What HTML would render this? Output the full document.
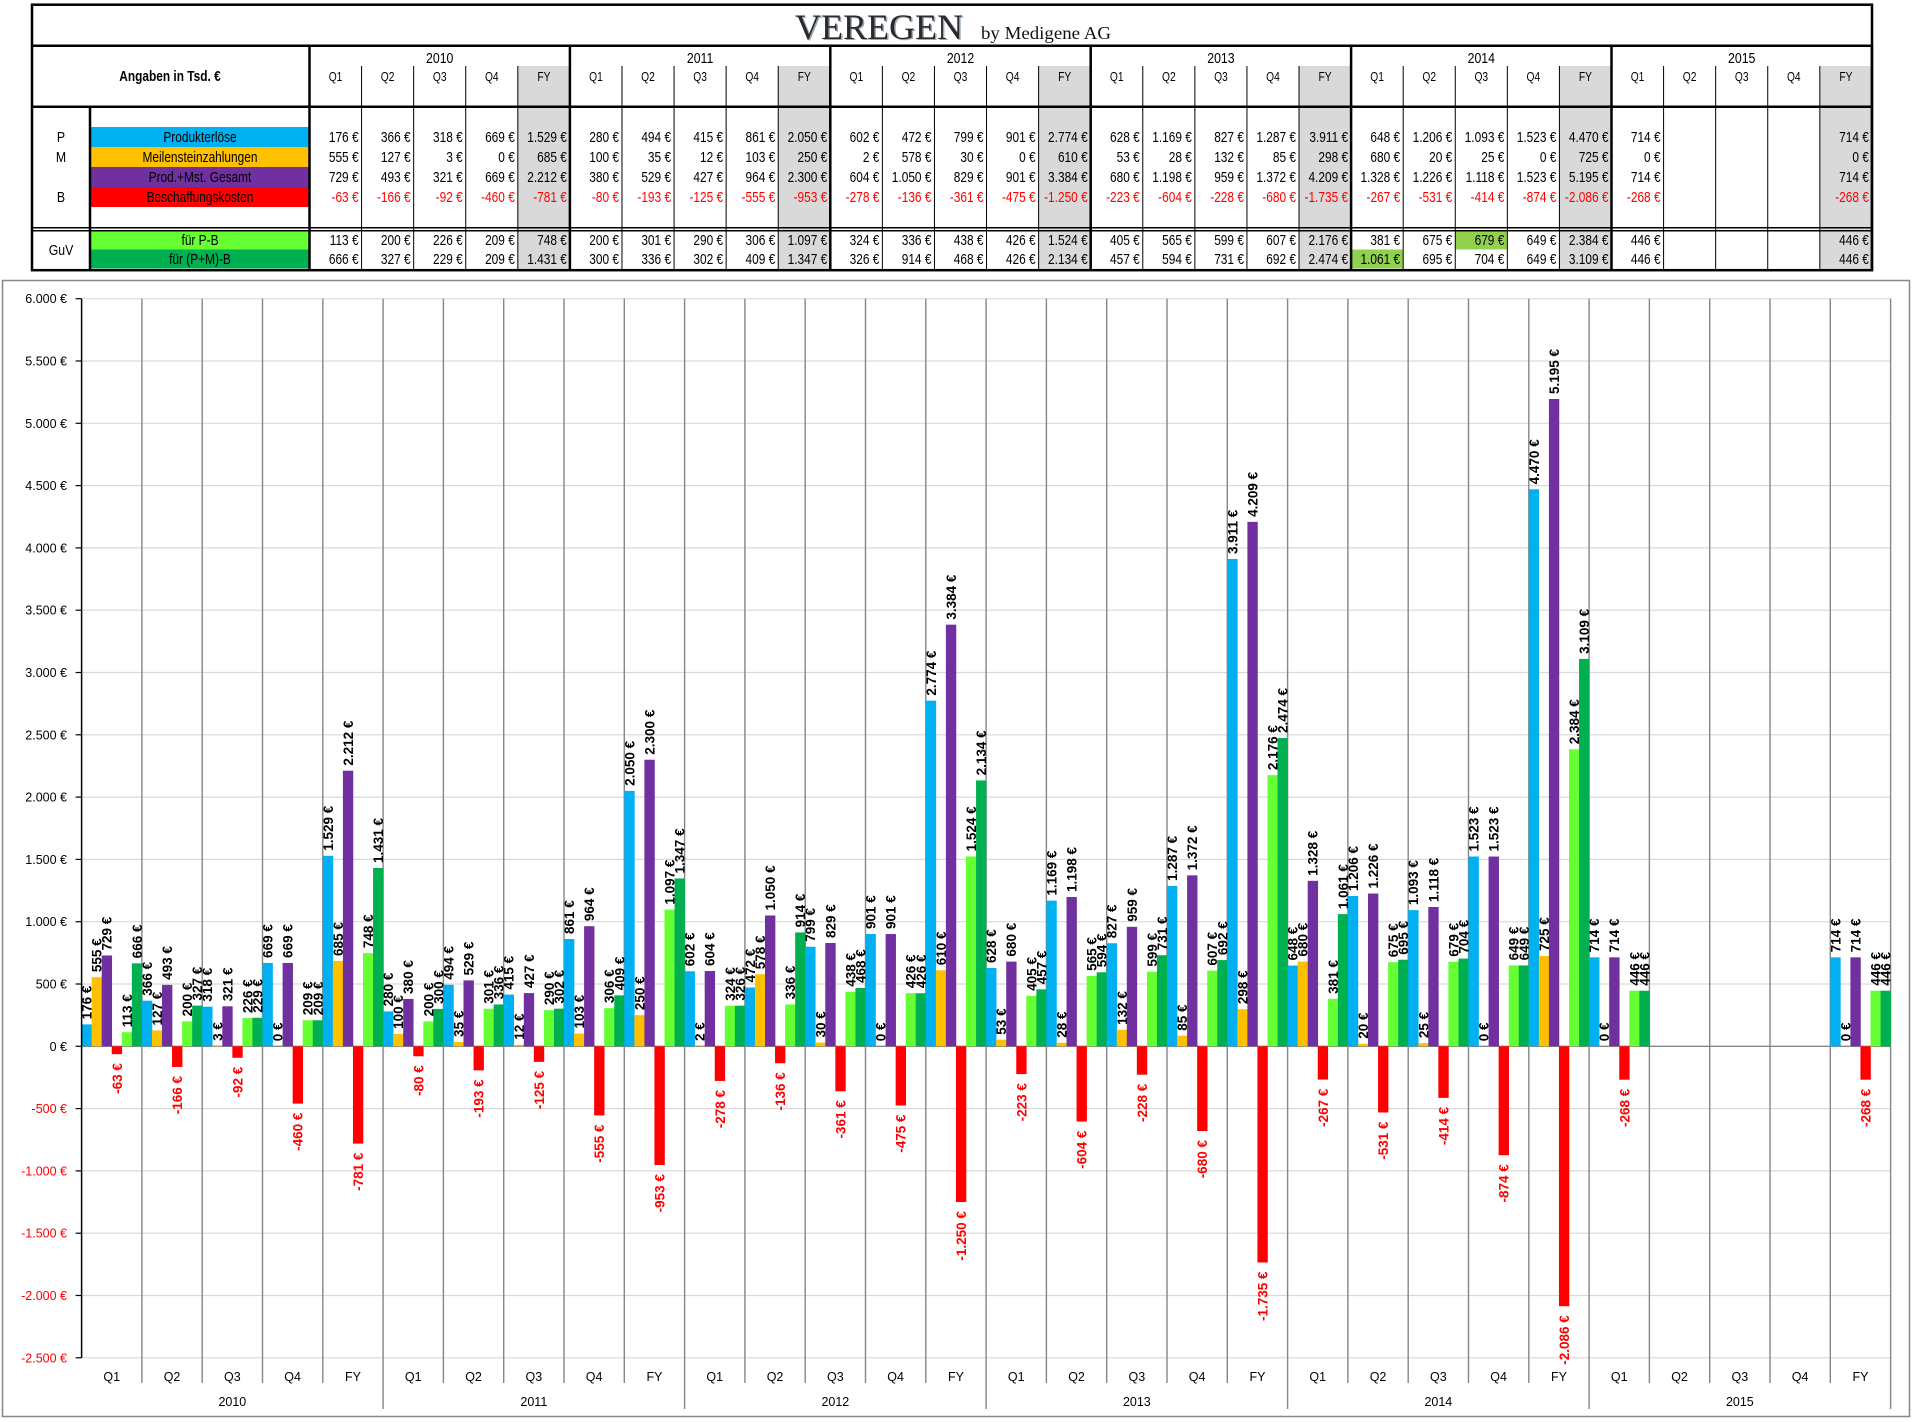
<!DOCTYPE html>
<html><head><meta charset="utf-8">
<style>
html,body{margin:0;padding:0;background:#fff;width:1916px;height:1422px;overflow:hidden}
svg{display:block}
</style></head>
<body>
<svg id="s" xmlns="http://www.w3.org/2000/svg" width="1916" height="1422" viewBox="0 0 1916 1422" font-family="Liberation Sans, Arial, sans-serif">
<rect x="0" y="0" width="1916" height="1422" fill="#fff"/>
<g id="tbl"></g>
<g id="chart"></g>
<text x="795" y="39" font-family="Liberation Serif, serif" font-size="36" fill="#9ab" textLength="168" lengthAdjust="spacingAndGlyphs" dx="1.5" dy="1">VEREGEN</text>
<text x="795" y="39" font-family="Liberation Serif, serif" font-size="36" fill="#2a2a2a" textLength="168" lengthAdjust="spacingAndGlyphs">VEREGEN</text>
<text x="981" y="39" font-family="Liberation Serif, serif" font-size="18" fill="#111" textLength="130" lengthAdjust="spacingAndGlyphs">by Medigene AG</text>
</svg>
<script>
var NS="http://www.w3.org/2000/svg";
function el(p,n,a,t){var e=document.createElementNS(NS,n);for(var k in a)e.setAttribute(k,a[k]);if(t!==undefined)e.textContent=t;p.appendChild(e);return e;}
var D=[
[176,555,729,-63,113,666],[366,127,493,-166,200,327],[318,3,321,-92,226,229],[669,0,669,-460,209,209],[1529,685,2212,-781,748,1431],
[280,100,380,-80,200,300],[494,35,529,-193,301,336],[415,12,427,-125,290,302],[861,103,964,-555,306,409],[2050,250,2300,-953,1097,1347],
[602,2,604,-278,324,326],[472,578,1050,-136,336,914],[799,30,829,-361,438,468],[901,0,901,-475,426,426],[2774,610,3384,-1250,1524,2134],
[628,53,680,-223,405,457],[1169,28,1198,-604,565,594],[827,132,959,-228,599,731],[1287,85,1372,-680,607,692],[3911,298,4209,-1735,2176,2474],
[648,680,1328,-267,381,1061],[1206,20,1226,-531,675,695],[1093,25,1118,-414,679,704],[1523,0,1523,-874,649,649],[4470,725,5195,-2086,2384,3109],
[714,0,714,-268,446,446],null,null,null,[714,0,714,-268,446,446]];
var YEARS=["2010","2011","2012","2013","2014","2015"],QS=["Q1","Q2","Q3","Q4","FY"];
var COL=["#00b0f0","#ffc000","#7030a0","#ff0000","#66ff33","#00b050"];
function fmt(v){var a=Math.abs(v).toString().replace(/\B(?=(\d{3})+(?!\d))/g,".");return (v<0?"-":"")+a+" €";}
function ntext(p,x,y,s,size,anchor,fill,weight){var g=el(p,"g",{transform:"translate("+x+","+y+") scale(0.82,1)"});el(g,"text",{x:0,y:0,"font-size":size,"text-anchor":anchor||"middle",fill:fill||"#000","font-weight":weight||"normal"},s);}
/* ---------- TABLE ---------- */
var T=document.getElementById("tbl");
var L=32,R=1872,X0=309.5,GW=260.4,CW=GW/5;
var rowsTop=[127,147,167,187],rowG=[230.5,249.5],rowH=20,rowGH=19;
// FY grey
for(var g=0;g<6;g++){el(T,"rect",{x:X0+g*GW+4*CW,y:66,width:CW,height:204,fill:"#d9d9d9"});}
// label color bars
var labs=["Produkterlöse","Meilensteinzahlungen","Prod.+Mst. Gesamt","Beschaffungskosten"];
for(var i=0;i<4;i++){el(T,"rect",{x:90,y:rowsTop[i],width:219.5,height:rowH,fill:COL[i]});ntext(T,200,rowsTop[i]+15,labs[i],14.5);}
el(T,"rect",{x:90,y:230.5,width:219.5,height:19,fill:COL[4]});
el(T,"rect",{x:90,y:249.5,width:219.5,height:19,fill:COL[5]});
ntext(T,200,245,"für P-B",14.5);ntext(T,200,264,"für (P+M)-B",14.5);
// highlights
el(T,"rect",{x:X0+4*GW,y:249.5,width:CW,height:19,fill:"#92d050"});
el(T,"rect",{x:X0+4*GW+2*CW,y:230.5,width:CW,height:19,fill:"#92d050"});
// letters
ntext(T,61,142,"P",15);ntext(T,61,162,"M",15);ntext(T,61,202,"B",15);ntext(T,61,255,"GuV",15);
ntext(T,170,81,"Angaben in Tsd. €",14.5,"middle","#000","bold");
// headers
for(var g=0;g<6;g++){ntext(T,X0+g*GW+GW/2,63,YEARS[g],15);
 for(var c=0;c<5;c++){ntext(T,X0+g*GW+c*CW+CW/2,81,QS[c],12.5);}}
// values
for(var i=0;i<30;i++){var d=D[i];if(!d)continue;var xr=X0+Math.floor(i/5)*GW+(i%5)*CW+CW-3;
 for(var k=0;k<4;k++){ntext(T,xr,rowsTop[k]+15,fmt(d[k]),14.5,"end",d[k]<0?"#ff0000":"#000");}
 ntext(T,xr,245,fmt(d[4]),14.5,"end");ntext(T,xr,264,fmt(d[5]),14.5,"end");}
// lines
function ln(p,x1,y1,x2,y2,w,c){el(p,"line",{x1:x1,y1:y1,x2:x2,y2:y2,stroke:c||"#000","stroke-width":w});}
for(var g=0;g<6;g++){for(var c=1;c<5;c++){var x=X0+g*GW+c*CW;ln(T,x,66,x,270,1);}}
for(var g=0;g<=6;g++){var x=X0+g*GW;ln(T,x,45.7,x,270,2.5);}
ln(T,90,106.7,90,270,2.5);
ln(T,L,45.7,R,45.7,2.5);ln(T,L,106.7,R,106.7,2.5);
ln(T,L,227.8,R,227.8,1.5);ln(T,L,230.8,R,230.8,1.5);
el(T,"rect",{x:L,y:4.7,width:R-L,height:265.5,fill:"none",stroke:"#000","stroke-width":2.5});
/* ---------- CHART ---------- */
var C=document.getElementById("chart");
var AX=81.6,CAT=60.3,Y0=1046.3,S=62.3/500,RX=AX+30*CAT;
function Y(v){return Y0-v*S;}
el(C,"rect",{x:2.5,y:280.5,width:1907,height:1136,fill:"#fff",stroke:"#868686","stroke-width":1.5});
for(var v=6000;v>=-2500;v-=500){var y=Y(v);if(v!==0)ln(C,AX,y,RX,y,1.2,"#d9d9d9");ln(C,AX-6,y,AX,y,1.2,"#000");
 el(C,"text",{x:67,y:y+4.5,"font-size":12.5,"text-anchor":"end",fill:v<0?"#ff0000":"#000"},(v<0?"-":"")+Math.abs(v).toString().replace(/\B(?=(\d{3})+(?!\d))/g,".")+" €");}
for(var i=1;i<=30;i++){var x=AX+i*CAT;ln(C,x,Y(6000),x,i%5==0?1409:1383,1.4,"#868686");}
ln(C,AX,Y0,RX,Y0,1.4,"#868686");
for(var i=0;i<30;i++){el(C,"text",{x:AX+i*CAT+CAT/2,y:1381,"font-size":12.5,"text-anchor":"middle",fill:"#000"},QS[i%5]);}
for(var g=0;g<6;g++){el(C,"text",{x:AX+g*5*CAT+2.5*CAT,y:1406,"font-size":12.5,"text-anchor":"middle",fill:"#000"},YEARS[g]);}
var BW=CAT/6;
for(var i=0;i<30;i++){var d=D[i];if(!d)continue;
 for(var k=0;k<6;k++){var v=d[k],x=AX+i*CAT+k*BW,cx=x+BW/2;
  if(v>0)el(C,"rect",{x:x,y:Y(v),width:BW+0.3,height:v*S,fill:COL[k]});
  else if(v<0)el(C,"rect",{x:x,y:Y0,width:BW+0.3,height:-v*S,fill:COL[k]});
  if(v>=0)el(C,"text",{transform:"translate("+(cx+5)+","+(Y(v)-5)+") rotate(-90)","font-size":13.5,"font-weight":"bold","text-anchor":"start",fill:"#000"},fmt(v));
  else el(C,"text",{transform:"translate("+(cx+5)+","+(Y(v)+9)+") rotate(-90)","font-size":13.5,"font-weight":"bold","text-anchor":"end",fill:"#ff0000"},fmt(v));
 }}
ln(C,AX,Y(6000),AX,Y(-2500),1.5,"#000");
</script>
</body></html>
